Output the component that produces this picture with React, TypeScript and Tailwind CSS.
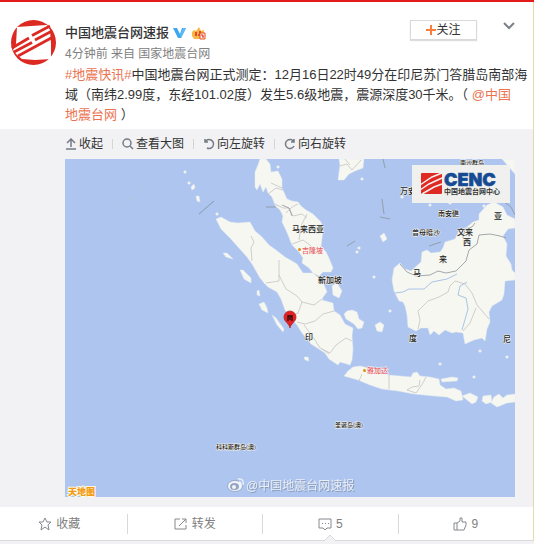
import React from "react";

const sans = "font-['Liberation_Sans','Noto_Sans_CJK_SC',sans-serif]";

function Avatar() {
  return (
    <svg viewBox="0 0 60 60" className="h-[60px] w-[60px] shrink-0" role="img" aria-label="中国地震台网">
      <circle cx="28.500" cy="28.500" r="22.500" fill="#dc2a22" />
      <path d="M12 13L26 12L42 11L45 16L46 30L46 45L30 46L17 45L12 41L8 36L11 30Z" fill="#fff" />
      <g stroke="#dc2a22" strokeWidth="2.800" fill="none">
        <path d="M7 34L24 24M27 21.500L45 12" />
        <path d="M9 38L27 28.500M30 26L47 17" />
        <path d="M13 42L48 23" />
      </g>
    </svg>
  );
}

function Badges() {
  return (
    <span className="flex items-center gap-1.5">
      <svg viewBox="0 0 13 12" className="h-3 w-[13px]" role="img" aria-label="认证">
        <path d="M0 1H4L7 7L9 1H13L8 11H5Z" fill="#3ca7ee" />
        <path d="M10 1H13L8 11L7 8Z" fill="#5bb9f5" />
      </svg>
      <svg viewBox="0 0 14 13" className="h-[13px] w-3.5" role="img" aria-label="会员">
        <path d="M0 5L2 3L4 4L7 0L9 4L12 3L12 11L10 12H2L0 9Z" fill="#f9b64a" />
        <path d="M3 5H5V9H3ZM7 4H9V9H6V7H7Z" fill="#e34b24" />
        <path d="M8 6H13V12H8Z" fill="#fff0df" stroke="#e3522c" />
        <path d="M10 7V9H12M11 9V11" stroke="#d83c20" fill="none" />
      </svg>
    </span>
  );
}

const land = [
  // Malay peninsula
  "M260 159L258 165L255 172L255 187L257 190L260 184L263 192L266 187L268 193L272 197L275 205L280 210L283 216L282 222L285 228L288 235L292 245L299 252L303 258L302 263L309 268L313 273L319 276L323 272L331 272L333 268L329 258L326 252L321 246L322 238L323 230L321 222L313 214L306 210L301 206L298 202L292 201L287 199L282 188L282 179L278 171L271 172L270 164L266 159Z",
  // Sumatra
  "M216 219L221 217L230 222L238 223L250 222L255 231L262 237L269 245L276 250L285 257L292 261L297 264L303 273L313 273L322 281L325 287L327 292L323 297L322 300L333 303L334 311L340 315L345 324L353 328L352 336L353 349L352 360L350 365L340 362L338 365L329 359L325 353L311 344L302 333L297 325L290 317L285 310L281 299L277 292L268 287L265 284L260 278L252 264L247 257L238 247L230 238L221 229Z",
  "M344 314L347 311L352 310L357 312L359 319L364 322L362 328L358 329L354 324L346 319Z",
  "M375 325L380 322L384 325L382 332L377 331Z",
  // Java and the islands east of it
  "M344 376L348 371L353 367L360 366L373 369L389 375L411 377L413 373L417 372L420 376L430 377L439 379L440 385L446 389L454 388L461 391L463 400L456 401L447 397L434 396L414 394L398 391L382 389L370 385L358 380Z",
  "M441 379L452 377L458 378L457 381L442 382Z",
  "M462 396L470 393L478 397L476 402L472 404Z",
  "M482 401L483 396L491 395L492 402L486 404Z",
  "M491 403L494 397L499 394L503 398L507 395L515 394V402L507 403L497 407Z",
  // Borneo
  "M421 262L422 252L427 250L431 253L440 252L443 248L445 242L455 239L459 231L467 227L473 222L479 220L479 214L487 205L494 202L503 207L507 215L515 219V228L508 229L503 236L507 244L506 256L511 264L512 270L515 273V280L505 281L504 294L502 300L492 306L489 312L490 322L487 329L485 341L482 338L474 340L465 344L463 333L456 332L452 333L445 330L439 335L434 331L430 335L428 328L421 328L416 331L408 327L407 315L405 306L403 302L399 301L394 291L392 280L394 268L400 263L405 269L411 271Z",
  "M339 159L340 165L338 180L344 180L349 174L355 171L363 168L364 159Z",
  "M502 159L515 174V159Z",
  "M240 270L243 270L251 278L251 283L244 279Z",
  "M259 304L264 302L267 308L268 313L262 310Z",
  "M272 315L276 318L284 329L283 332L277 325Z",
  "M332 286L337 283L342 291L339 298L333 295Z",
  "M257 291L259 290L260 296L257 295Z",
  "M196 196L199 196L200 202L197 201Z",
  "M191 187L194 184L195 188L192 190Z",
  "M304 357L308 357L309 361L305 360Z",
  "M223 253L227 253L233 259L226 257Z",
  "M380 236L384 233L387 239L383 242Z",
];

const dots = [
  [185, 172], [189, 183], [217, 214], [277, 206], [278, 167], [362, 179],
  [359, 248], [357, 252], [374, 277], [390, 311], [440, 364], [474, 377],
  [480, 351], [507, 357], [402, 197], [430, 205], [450, 203], [484, 206],
];

const borders =
  "M275 204L283 208L289 208L293 216L302 214L307 218M286 213L292 207L298 204M267 195L276 188L283 190M271 183L282 188M307 214L301 226L299 240M292 244L303 240L311 246L313 255M311 228L319 234M251 236L254 242L251 248L252 261M266 283L279 281L279 260M279 275L286 289L297 296L302 302L298 313L289 317M302 302L314 305L322 299M297 322L305 324L315 321L323 314L334 311M304 325L313 337L320 348L330 353L336 345L346 338L352 341M322 349L329 354M389 375V389M426 377L423 383L416 393L407 390L412 387L419 386L420 380M359 381L362 374";

const darkBorders =
  "M266 207L276 207M282 205L289 208L292 216M400 264L407 272L416 276L430 275L438 271L446 273L456 271L466 261L469 250L477 244L479 235L490 234L500 236L506 238M463 238L465 229L472 227L475 223M383 159L385 168M382 199L384 214M380 217L390 219M429 246L441 242M347 246L355 241M503 201L511 207L515 215";

function MapText({ x, y, size, children, fill = "#222" }: { x: number; y: number; size: number; children: string; fill?: string }) {
  return (
    <text x={x} y={y} fontSize={size} fill={fill} stroke="#f7f7f2" strokeWidth="1" paintOrder="stroke" strokeLinejoin="round">
      {children}
    </text>
  );
}

function QuakeMap() {
  return (
    <svg viewBox="65 159 450 338" className={`block h-auto w-full bg-[#adc5ef] ${sans}`} role="img" aria-label="地震位置地图">
      <g fill="#f7f7f1" stroke="#e3e9ee" strokeWidth="0.500" strokeLinejoin="round">
        {land.map((d) => (
          <path key={d} d={d} />
        ))}
        {dots.map(([x, y]) => (
          <circle key={`${x}-${y}`} cx={x} cy={y} r="1.300" />
        ))}
      </g>
      <g fill="none" strokeLinejoin="round">
        <path d={borders} stroke="#c3c3c3" strokeWidth="0.800" />
        <path d={darkBorders} stroke="#8c9499" strokeWidth="0.800" />
        <path d="M418 329L420 320L418 311L428 301L439 297L448 292L450 286L455 281L465 284L472 293L477 305L489 319M476 308L470 323L463 331" stroke="#c3c3c3" strokeWidth="0.800" />
        <path d="M395 293L403 292L409 289L424 289L432 282L447 279L457 274M467 282L460 286L458 295L466 298L468 309L462 330" stroke="#a8c4e8" />
        <path d="M199 214L214 201" stroke="#819ba8" />
        <path d="M340 166L347 164L352 170L361 160M345 159L350 165" stroke="#c3c3c3" strokeWidth="0.800" />
        <path d="M115 203L121 209M126 197L132 199M138 186L142 190" stroke="#bac5dc" />
      </g>

      <g fontWeight="500">
        <MapText x={460} y={165} size={6}>南沙群岛</MapText>
        <MapText x={400} y={194} size={8}>万安滩</MapText>
        <MapText x={438} y={216} size={7}>南安礁</MapText>
        <MapText x={412} y={235} size={7}>曾母暗沙</MapText>
        <MapText x={494} y={219} size={8}>亚</MapText>
        <MapText x={457} y={235} size={8}>文来</MapText>
        <MapText x={463} y={245} size={8}>西</MapText>
        <MapText x={439} y={262} size={8}>来</MapText>
        <MapText x={413} y={276} size={8}>马</MapText>
        <MapText x={292} y={232} size={8}>马来西亚</MapText>
        <MapText x={318} y={283} size={8}>新加坡</MapText>
        <MapText x={305} y={340} size={8}>印</MapText>
        <MapText x={409} y={341} size={8}>度</MapText>
        <MapText x={503} y={342} size={8}>尼</MapText>
        <MapText x={302} y={253} size={7} fill="#e8636c">吉隆坡</MapText>
        <MapText x={367} y={373} size={7} fill="#e8636c">雅加达</MapText>
        <MapText x={335} y={427} size={6}>圣诞岛(澳)</MapText>
        <MapText x={216} y={449} size={6}>科科斯群岛(澳)</MapText>
      </g>
      <circle cx="299.500" cy="249.500" r="1.500" fill="#e58b19" />
      <circle cx="364.500" cy="370.500" r="1.500" fill="#e58b19" />

      <path d="M290 328C289 323 284 322 284 317A6 6 0 0 1 296 317C296 322 291 323 290 328Z" fill="#e52025" stroke="#a91d20" strokeWidth="0.700" />
      <path d="M288 321V316H292V321M290 317V320" stroke="#240b0b" strokeWidth="1.300" fill="none" />

      <rect x="412" y="165" width="98" height="38" fill="#f0f0ee" />
      <rect x="421" y="173" width="21" height="21" rx="1" fill="#df2a24" />
      <path d="M420 185L432 177L442 173M420 190L429 184L442 178M422 194L434 187L442 184" stroke="#f3f0ed" strokeWidth="1.500" fill="none" />
      <text x="444" y="186" fontSize="18" fontWeight="900" fill="#164b94" stroke="#164b94" strokeWidth="0.500" className="font-['Inter',sans-serif]">CENC</text>
      <text x="444" y="194" fontSize="7" fontWeight="700" fill="#333">中国地震台网中心</text>

      <text x="68" y="495" fontSize="9" fontWeight="900" fill="#f39a16" stroke="#fffbe8" strokeWidth="2" paintOrder="stroke">天地图</text>

      <g>
        <ellipse cx="235" cy="486" rx="7.500" ry="5.500" fill="#f1f4fa" stroke="#8797b3" strokeWidth="0.700" />
        <ellipse cx="234.500" cy="486.500" rx="4.500" ry="3.500" fill="#94a5c4" />
        <circle cx="234" cy="487" r="2" fill="#f1f4fa" />
        <path d="M238 479C242 478 244 481 243 485M239 482C241 482 241 483 241 485" stroke="#f1f4fa" strokeWidth="1.300" fill="none" />
        <text x="246" y="490" fontSize="12" fill="#e9eef8" className="drop-shadow-[1px_1px_0_#8a9bb8]">@中国地震台网速报</text>
      </g>
    </svg>
  );
}

function Tool({ label, children }: { label: string; children: React.ReactNode }) {
  return (
    <button type="button" className="flex items-center gap-0.5 whitespace-nowrap">
      <svg viewBox="0 0 12 12" className="h-3 w-3 fill-none stroke-[#747b84] stroke-[1.5]" aria-hidden="true">
        {children}
      </svg>
      {label}
    </button>
  );
}

function Separator() {
  return <span className="mx-[9px] h-2.5 w-px bg-[#d3d4d8]" />;
}

function Action({ label, name, children }: { label: string; name: string; children: React.ReactNode }) {
  return (
    <li className="relative flex flex-1 items-center justify-center border-l border-[#d9d9d9] first:border-l-0">
      <button type="button" aria-label={name} className="flex items-center gap-1">
        <svg viewBox="0 0 14 14" className="h-3.5 w-3.5 fill-none stroke-[#85888d] stroke-1" aria-hidden="true">
          {children}
        </svg>
        {label}
      </button>
      {name === "评论" && (
        <svg viewBox="0 0 12 6" className="absolute -bottom-[7px] left-1/2 h-1.5 w-3 -translate-x-1/2" aria-hidden="true">
          <path d="M0 6L6 0L12 6" fill="#f2f2f5" stroke="#d9d9d9" />
        </svg>
      )}
    </li>
  );
}

export default function App() {
  return (
    <div className={`border-t-2 border-[#e4191b] bg-[#f2f2f5] pb-1 text-xs text-[#333] ${sans}`}>
      <article className="border-r border-[#e8d9ac] bg-white">
        <div className="flex pb-1 pl-[5px] pr-[18px]">
          <div className="pt-3">
            <Avatar />
          </div>
          <div className="min-w-0 flex-1 pt-[18px]">
            <header className="flex items-start justify-between">
              <div className="pt-[3px]">
                <h1 className="flex h-5 items-center gap-1 text-[13px] font-medium leading-5">
                  中国地震台网速报
                  <Badges />
                </h1>
                <p className="h-[22px] leading-[22px] text-[#808080]">
                  4分钟前 来自 <a href="#source">国家地震台网</a>
                </p>
              </div>
              <div className="flex items-start gap-[26px]">
                <button type="button" className="flex h-5 w-[67px] items-center justify-center border border-[#d9d9d9] bg-white shadow-[0_1px_1px_#ddd]">
                  <svg viewBox="0 0 10 10" className="h-2.5 w-2.5 stroke-[#fa7d3c] stroke-2" aria-hidden="true">
                    <path d="M0 5H10M5 0V10" />
                  </svg>
                  关注
                </button>
                <button type="button" aria-label="更多" className="pt-0.5">
                  <svg viewBox="0 0 12 8" className="h-2 w-3 fill-none stroke-[#7c8087] stroke-2" aria-hidden="true">
                    <path d="M1 1L6 6L11 1" />
                  </svg>
                </button>
              </div>
            </header>
            <p className="-mr-4 text-[13px] leading-5">
              <a href="#topic" className="text-[#eb7350]">#地震快讯#</a>
              中国地震台网正式测定：12月16日22时49分在印尼苏门答腊岛南部海
              <br />
              域（南纬2.99度，东经101.02度）发生5.6级地震，震源深度30千米。（{" "}
              <a href="#cenc" className="text-[#eb7350]">
                @中国
                <br />
                地震台网
              </a>
              {" "}）
            </p>
          </div>
        </div>

        <section className="bg-[#f2f2f5] pb-2.5 pl-[65px] pr-[18px]">
          <div className="flex h-[30px] items-center">
            <Tool label="收起">
              <path d="M1 11H11M6 9V2M2 5L6 1L10 5" />
            </Tool>
            <Separator />
            <Tool label="查看大图">
              <circle cx="5" cy="5" r="4" />
              <path d="M8 8L11 11" />
            </Tool>
            <Separator />
            <Tool label="向左旋转">
              <path d="M2 1V4H5M2 4A4.500 4.500 0 1 1 4 10" />
            </Tool>
            <Separator />
            <Tool label="向右旋转">
              <path d="M10 1V4H7M10 4A4.500 4.500 0 1 0 10 8" />
            </Tool>
          </div>
          <QuakeMap />
        </section>

        <footer className="border-b border-[#d9d9d9] pb-1.5 pt-[7px]">
          <ul className="-ml-2 flex h-5 text-[#808080]">
            <Action label="收藏" name="收藏">
              <path d="M7 1L9 5L13 5L10 8L11 13L7 10L3 13L4 8L1 5L5 5Z" />
            </Action>
            <Action label="转发" name="转发">
              <path d="M6 2H1V12H12V8M5 9L12 2M8 2H12V6" />
            </Action>
            <Action label="5" name="评论">
              <path d="M1 2H13V11H9L7 13L5 11H1ZM4 6.500H5M7 6.500H8M10 6.500H11" />
            </Action>
            <Action label="9" name="赞">
              <path d="M1 6H4V13H1ZM4 6L7 4V1H9V5H13V8L11 13H4" />
            </Action>
          </ul>
        </footer>
      </article>
    </div>
  );
}
